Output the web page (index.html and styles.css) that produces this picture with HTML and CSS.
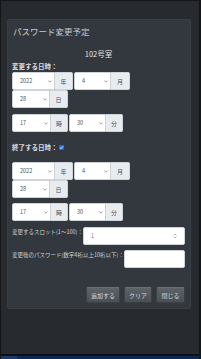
FILE: index.html
```html
<!DOCTYPE html>
<html lang="ja">
<head>
<meta charset="utf-8">
<title>パスワード変更予定</title>
<link rel="stylesheet" href="styles.css">
</head>
<body>
<div class="screen">
  <div class="content">
    <div class="card">
      <div class="card-title">パスワード変更予定</div>
      <div class="room">102号室</div>

      <div class="label label-first">変更する日時：</div>
      <div class="date-rows">
        <div class="group"><div class="sel w43"><span>2022</span><svg class="chev" width="4" height="3" viewBox="0 0 4 3"><path d="M0.4 0.6 L2 2.2 L3.6 0.6" fill="none" stroke="#6c757d" stroke-width="0.7"/></svg></div><div class="addon">年</div></div>
        <div class="group"><div class="sel w37"><span>4</span><svg class="chev" width="4" height="3" viewBox="0 0 4 3"><path d="M0.4 0.6 L2 2.2 L3.6 0.6" fill="none" stroke="#6c757d" stroke-width="0.7"/></svg></div><div class="addon w19">月</div></div>
        <div class="group"><div class="sel w38"><span>28</span><svg class="chev" width="4" height="3" viewBox="0 0 4 3"><path d="M0.4 0.6 L2 2.2 L3.6 0.6" fill="none" stroke="#6c757d" stroke-width="0.7"/></svg></div><div class="addon">日</div></div>
      </div>
      <div class="time-row">
        <div class="group"><div class="sel w39"><span>17</span><svg class="chev" width="4" height="3" viewBox="0 0 4 3"><path d="M0.4 0.6 L2 2.2 L3.6 0.6" fill="none" stroke="#6c757d" stroke-width="0.7"/></svg></div><div class="addon w17">時</div></div>
        <div class="group"><div class="sel w37"><span>30</span><svg class="chev" width="4" height="3" viewBox="0 0 4 3"><path d="M0.4 0.6 L2 2.2 L3.6 0.6" fill="none" stroke="#6c757d" stroke-width="0.7"/></svg></div><div class="addon w17">分</div></div>
      </div>

      <div class="label label-second">終了する日時：<span class="check"><svg width="5" height="5" viewBox="0 0 5 5"><path d="M1 2.6 L2.1 3.6 L4 1.3" fill="none" stroke="#fff" stroke-width="0.8"/></svg></span></div>
      <div class="date-rows date-rows-second">
        <div class="group"><div class="sel w43"><span>2022</span><svg class="chev" width="4" height="3" viewBox="0 0 4 3"><path d="M0.4 0.6 L2 2.2 L3.6 0.6" fill="none" stroke="#6c757d" stroke-width="0.7"/></svg></div><div class="addon">年</div></div>
        <div class="group"><div class="sel w37"><span>4</span><svg class="chev" width="4" height="3" viewBox="0 0 4 3"><path d="M0.4 0.6 L2 2.2 L3.6 0.6" fill="none" stroke="#6c757d" stroke-width="0.7"/></svg></div><div class="addon w19">月</div></div>
        <div class="group"><div class="sel w38"><span>28</span><svg class="chev" width="4" height="3" viewBox="0 0 4 3"><path d="M0.4 0.6 L2 2.2 L3.6 0.6" fill="none" stroke="#6c757d" stroke-width="0.7"/></svg></div><div class="addon">日</div></div>
      </div>
      <div class="time-row time-row-second">
        <div class="group"><div class="sel w39"><span>17</span><svg class="chev" width="4" height="3" viewBox="0 0 4 3"><path d="M0.4 0.6 L2 2.2 L3.6 0.6" fill="none" stroke="#6c757d" stroke-width="0.7"/></svg></div><div class="addon w17">時</div></div>
        <div class="group"><div class="sel w37"><span>30</span><svg class="chev" width="4" height="3" viewBox="0 0 4 3"><path d="M0.4 0.6 L2 2.2 L3.6 0.6" fill="none" stroke="#6c757d" stroke-width="0.7"/></svg></div><div class="addon w17">分</div></div>
      </div>

      <div class="field field-slot">
        <div class="field-label">変更するスロット(1〜100)：</div>
        <div class="input input-slot"><span>1</span><svg class="spin" width="4" height="6" viewBox="0 0 4 6"><path d="M0.6 2.4 L2 1 L3.4 2.4 M0.6 3.6 L2 5 L3.4 3.6" fill="none" stroke="#8a8f94" stroke-width="0.6"/></svg></div>
      </div>
      <div class="field field-pass">
        <div class="field-label">変更後のパスワード(数字4桁以上10桁以下)：</div>
        <div class="input input-pass"></div>
      </div>

      <div class="buttons">
        <div class="btn btn-add">追加する</div>
        <div class="btn btn-clear">クリア</div>
        <div class="btn btn-close">閉じる</div>
      </div>
    </div>
  </div>
  <div class="taskbar"><div class="taskbar-start"></div></div>
</div>
</body>
</html>
```
FILE: styles.css
```css
html, body {
  margin: 0;
  padding: 0;
  background: #141618;
}

body {
  font-family: "Noto Sans CJK JP", "Noto Sans", sans-serif;
}

.screen {
  width: 201px;
  height: 359px;
  box-sizing: border-box;
  border-top: 1px solid #141618;
  border-left: 1px solid #141618;
  border-right: 2px solid #141618;
  display: flex;
  flex-direction: column;
}

.content {
  flex: 1;
  background: #272b30;
  padding: 18px 8px 0 6px;
}

.taskbar {
  height: 3px;
  border-top: 2px solid #0e1012;
  background: #0c2857;
  display: flex;
}

.taskbar-start {
  width: 16px;
  background: #1d3a6b;
}

.card {
  background: #32383e;
  border: 1px solid #3a4046;
  border-radius: 2px;
  padding: 6px 5px 5px 4px;
  color: #d8d8d8;
}

.card-title {
  font-size: 8.5px;
  line-height: 11px;
  color: #c8cacc;
  padding-left: 1px;
}

.room {
  margin-top: 12px;
  font-size: 7.5px;
  line-height: 10px;
  text-align: center;
  color: #e4e4e4;
}

.label {
  font-size: 6.5px;
  line-height: 8px;
  font-weight: bold;
  color: #dcdcdc;
  display: flex;
  align-items: center;
}

.label-first {
  margin-top: 3px;
}

.label-second {
  margin-top: 11px;
}

.check {
  width: 5px;
  height: 5px;
  background: #1a6ff0;
  border-radius: 1px;
  display: flex;
  align-items: center;
  justify-content: center;
  margin-left: 1px;
}

.date-rows {
  margin-top: 2px;
  display: flex;
  flex-wrap: wrap;
  column-gap: 1px;
  width: 170px;
}

.date-rows-second {
  margin-top: 11px;
}

.time-row {
  margin-top: 6px;
  display: flex;
  column-gap: 1px;
}

.time-row-second {
  margin-top: 5px;
}

.group {
  display: flex;
  height: 18px;
}

.sel {
  box-sizing: border-box;
  height: 18px;
  background: #ffffff;
  border: 1px solid #ced4da;
  border-radius: 2px 0 0 2px;
  display: flex;
  align-items: center;
  justify-content: space-between;
  padding: 0 2px 0 7px;
  font-size: 5.5px;
  color: #495057;
}

.w43 { width: 43px; }
.w39 { width: 39px; }
.w38 { width: 38px; }
.w37 { width: 37px; }

.addon {
  box-sizing: border-box;
  width: 18px;
  height: 18px;
  background: #e9ecef;
  border: 1px solid #ced4da;
  border-left: none;
  border-radius: 0 2px 2px 0;
  display: flex;
  align-items: center;
  justify-content: center;
  font-size: 6px;
  color: #495057;
}

.addon.w19 { width: 19px; }
.addon.w17 { width: 17px; }

.field {
  display: flex;
  align-items: flex-start;
}

.field-slot {
  margin-top: 6px;
}

.field-pass {
  margin-top: 5px;
}

.field-label {
  font-size: 5.5px;
  line-height: 9px;
  color: #d0d2d4;
  margin-top: 1px;
  white-space: nowrap;
}

.input {
  margin-left: auto;
  box-sizing: border-box;
  height: 18px;
  background: #ffffff;
  border: 1px solid #ced4da;
  border-radius: 2px;
  display: flex;
  align-items: center;
  justify-content: space-between;
  font-size: 5.5px;
  color: #6c757d;
}

.input-slot {
  width: 102px;
  padding: 0 7px 0 7px;
}

.input-pass {
  width: 61px;
}

.buttons {
  margin-top: 19px;
  display: flex;
  justify-content: flex-end;
  column-gap: 4px;
}

.btn {
  box-sizing: border-box;
  height: 16px;
  display: flex;
  align-items: center;
  justify-content: center;
  font-size: 6px;
  color: #d4d6d8;
  background: linear-gradient(#5e6369, #52575d 60%, #4a4f55);
  border: 1px solid #3c4146;
  border-top-color: #6a6f75;
  border-radius: 2px;
}

.btn-add { width: 34px; }
.btn-clear { width: 28px; }
.btn-close { width: 29px; }
```
